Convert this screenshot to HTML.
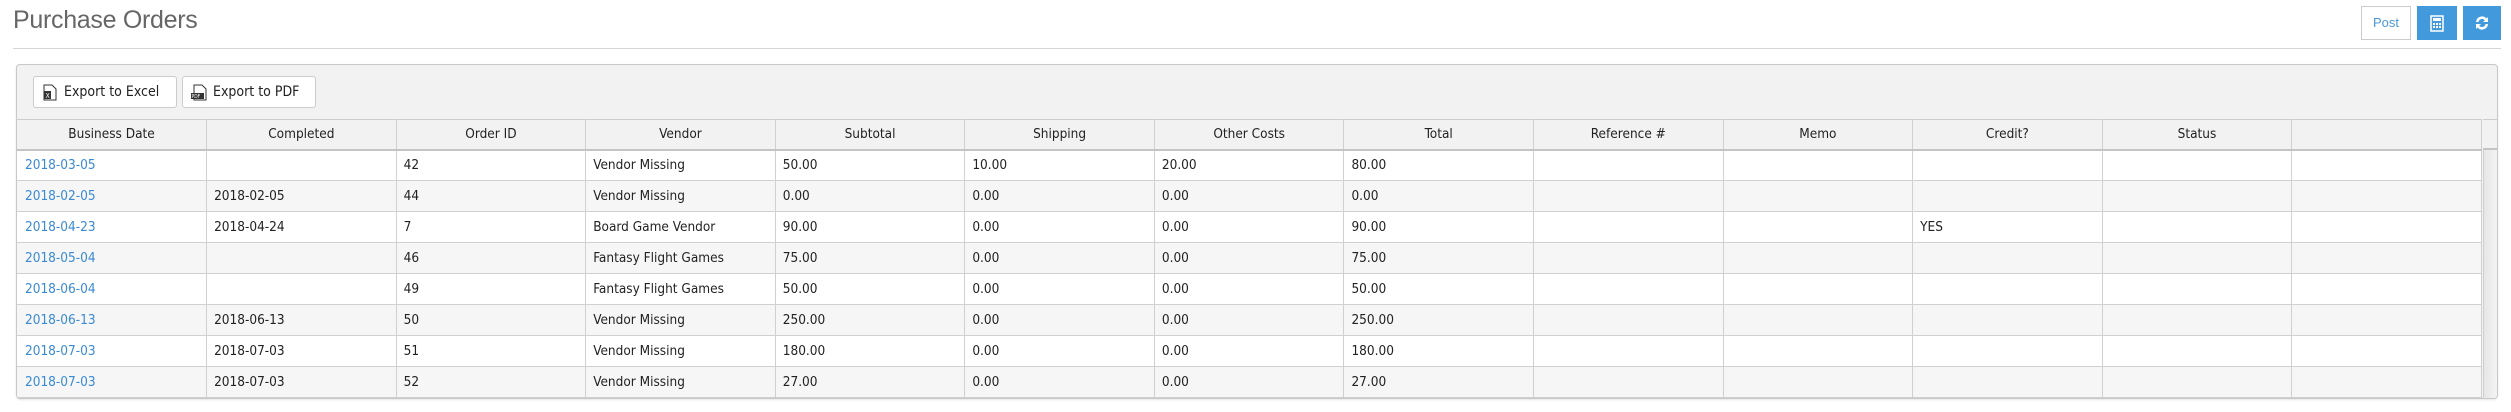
<!DOCTYPE html>
<html><head><meta charset="utf-8"><style>
*{box-sizing:border-box;margin:0;padding:0}
body{width:2511px;height:412px;background:#fff;font-family:"DejaVu Sans Condensed","DejaVu Sans","Liberation Sans",sans-serif;font-stretch:condensed;font-size:13px;color:#222;position:relative;overflow:hidden}
h1{position:absolute;left:13px;top:6px;font-family:"Liberation Sans",sans-serif;font-weight:normal;font-size:25px;color:#666;letter-spacing:-0.3px}
.hr{position:absolute;left:13px;top:48px;width:2488px;height:1px;background:#d6d6d6}
.btn{position:absolute;top:6px;height:34px}
.post{left:2361px;width:50px;border:1px solid #ccc;color:#4a98d8;font-family:"Liberation Sans",sans-serif;font-size:13px;line-height:32px;text-align:center}
.blue{background:#4299dc}
.panel{position:absolute;left:16px;top:64px;width:2482px;height:335px;border:1px solid #c8c8c8;border-radius:4px;background:#f2f2f2;overflow:hidden;box-shadow:0 1px 2px rgba(0,0,0,.1)}
.eb{position:absolute;top:11px;height:32px;border:1px solid #ccc;border-radius:3px;background:#fff;font-size:14px;line-height:30px;padding-left:30px}
table{position:absolute;left:0;top:54px;width:2465px;border-collapse:collapse;table-layout:fixed}
th{height:30px;font-weight:normal;font-size:13.5px;border-right:1px solid #d0d0d0;border-top:1px solid #ccc;border-bottom:2px solid #c4c4c4;background:#f2f2f2;color:#222}
td{height:31px;border-right:1px solid #d0d0d0;border-bottom:1px solid #d0d0d0;padding-left:7px;font-size:13.5px;white-space:nowrap}
td:first-child{padding-left:8px;color:#3a8ad6}
tr:nth-child(even) td{background:#fff}
tr:nth-child(odd) td{background:#f6f6f6}
.sc{position:absolute;left:2466px;top:54px;width:16px;height:31px;border-top:1px solid #ccc;border-bottom:2px solid #c4c4c4;background:#f2f2f2}
.sb{position:absolute;left:2466px;top:85px;width:16px;height:250px;background:linear-gradient(90deg,#e6e6e6,#f6f6f6);border-left:1px solid #d0d0d0}
</style></head><body>
<h1>Purchase Orders</h1>
<div class="hr"></div>
<div class="btn post">Post</div>
<div class="btn blue" style="left:2417px;width:40px">
<svg width="40" height="34" viewBox="0 0 40 34"><rect x="14" y="10" width="12" height="15" fill="none" stroke="#fff" stroke-width="1.5"/><rect x="16" y="12" width="8" height="3" fill="#fff"/><g fill="#fff"><rect x="16" y="17" width="2" height="2"/><rect x="19" y="17" width="2" height="2"/><rect x="22" y="17" width="2" height="2"/><rect x="16" y="20" width="2" height="2"/><rect x="19" y="20" width="2" height="2"/><rect x="22" y="20" width="2" height="2"/></g></svg></div>
<div class="btn blue" style="left:2463px;width:38px">
<svg width="38" height="34" viewBox="0 0 38 34"><path d="M13 16a6 6 0 0 1 10.5-3.5L25 11v5h-5l1.8-1.8A3.6 3.6 0 0 0 15.5 16z M25 18a6 6 0 0 1-10.5 3.5L13 23v-5h5l-1.8 1.8A3.6 3.6 0 0 0 22.5 18z" fill="#fff"/></svg></div>
<div class="panel">
<div class="eb" style="left:16px;width:144px"><svg style="position:absolute;left:9px;top:7px" width="14" height="17" viewBox="0 0 14 17"><path d="M1 1h8l4 4v11H1z" fill="#fff" stroke="#333"/><rect x="1" y="7" width="7" height="8" fill="#333"/><text x="2.5" y="14" font-size="7" fill="#fff" font-family="DejaVu Sans">X</text></svg>Export to Excel</div>
<div class="eb" style="left:165px;width:134px"><svg style="position:absolute;left:8px;top:7px" width="16" height="17" viewBox="0 0 16 17"><path d="M3 1h8l4 4v11H3z" fill="#fff" stroke="#333"/><rect x="0" y="9" width="13" height="6" fill="#333"/><text x="0.5" y="14" font-size="5" fill="#fff" font-family="DejaVu Sans">PDF</text></svg>Export to PDF</div>
<table>
<tr><th>Business Date</th><th>Completed</th><th>Order ID</th><th>Vendor</th><th>Subtotal</th><th>Shipping</th><th>Other Costs</th><th>Total</th><th>Reference #</th><th>Memo</th><th>Credit?</th><th>Status</th><th></th></tr>
<tr><td>2018-03-05</td><td></td><td>42</td><td>Vendor Missing</td><td>50.00</td><td>10.00</td><td>20.00</td><td>80.00</td><td></td><td></td><td></td><td></td><td></td></tr>
<tr><td>2018-02-05</td><td>2018-02-05</td><td>44</td><td>Vendor Missing</td><td>0.00</td><td>0.00</td><td>0.00</td><td>0.00</td><td></td><td></td><td></td><td></td><td></td></tr>
<tr><td>2018-04-23</td><td>2018-04-24</td><td>7</td><td>Board Game Vendor</td><td>90.00</td><td>0.00</td><td>0.00</td><td>90.00</td><td></td><td></td><td>YES</td><td></td><td></td></tr>
<tr><td>2018-05-04</td><td></td><td>46</td><td>Fantasy Flight Games</td><td>75.00</td><td>0.00</td><td>0.00</td><td>75.00</td><td></td><td></td><td></td><td></td><td></td></tr>
<tr><td>2018-06-04</td><td></td><td>49</td><td>Fantasy Flight Games</td><td>50.00</td><td>0.00</td><td>0.00</td><td>50.00</td><td></td><td></td><td></td><td></td><td></td></tr>
<tr><td>2018-06-13</td><td>2018-06-13</td><td>50</td><td>Vendor Missing</td><td>250.00</td><td>0.00</td><td>0.00</td><td>250.00</td><td></td><td></td><td></td><td></td><td></td></tr>
<tr><td>2018-07-03</td><td>2018-07-03</td><td>51</td><td>Vendor Missing</td><td>180.00</td><td>0.00</td><td>0.00</td><td>180.00</td><td></td><td></td><td></td><td></td><td></td></tr>
<tr><td>2018-07-03</td><td>2018-07-03</td><td>52</td><td>Vendor Missing</td><td>27.00</td><td>0.00</td><td>0.00</td><td>27.00</td><td></td><td></td><td></td><td></td><td></td></tr>
</table>
<div class="sc"></div><div class="sb"></div>
</div>
</body></html>
